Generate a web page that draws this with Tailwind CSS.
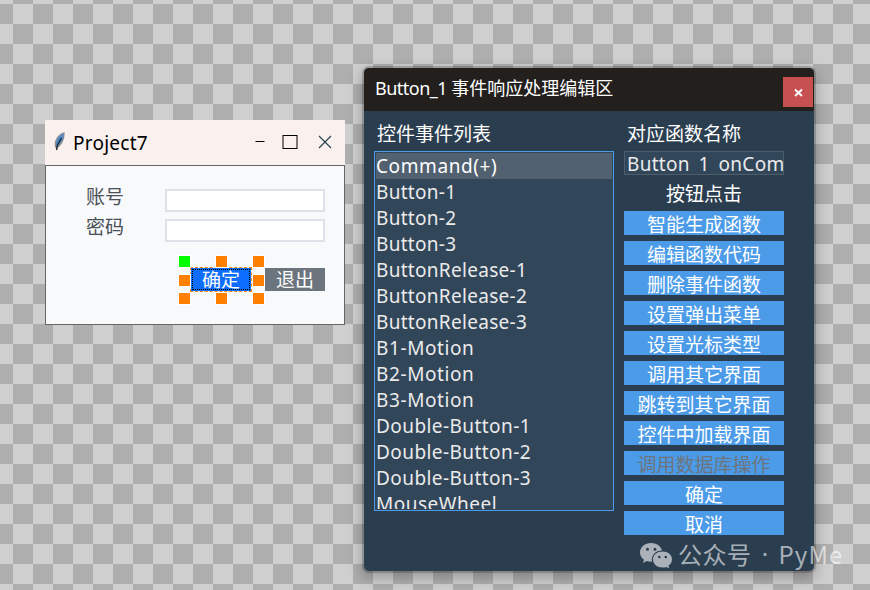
<!DOCTYPE html>
<html lang="zh-CN">
<head>
    <meta charset="UTF-8">
    <meta name="viewport" content="width=device-width, initial-scale=1.0">
    <title>PyMe</title>
    <script src="https://cdn.jsdelivr.net/npm/@tailwindcss/browser@4"></script>
</head>
<body class="relative w-[870px] h-[590px] overflow-hidden bg-[conic-gradient(#aeaeae_25%,#cfcfcf_0_50%,#aeaeae_0_75%,#cfcfcf_0)] bg-[length:40px_40px] bg-[position:13px_4px] font-['Noto_Sans','Noto_Sans_CJK_SC',sans-serif] text-[19px]">

    <!-- Project7 -->
    <div class="absolute left-[45px] top-[120px] w-[300px] h-[205px] flex flex-col">
        <div class="h-[45px] bg-[#faf0ed] flex items-center pl-2 text-black">
            <svg class="w-3 h-5 mr-2 -mt-1" viewBox="0 0 12 20">
                <path d="M2.500 17C0 12 3 4 11.500 1C12 7 10 13 4.500 17Z" fill="#8b8f96"/>
                <path d="M3 15C3 9 6 5 10.500 2.500C10.500 8 8 12 4 15Z" fill="#4a8ad0"/>
                <path d="M3.500 19L4.500 14L8.500 7" fill="none" stroke="#1c242e" stroke-width="1.400"/>
            </svg>
            <span class="grow text-[19px] tracking-[0.25px] mt-px">Project7</span>
            <svg class="w-[90px] h-[20px] mr-2" viewBox="0 0 90 20" fill="none" stroke="#000">
                <path d="M8.500 8.500H17.500" stroke-width="1"/>
                <rect x="36" y="2.500" width="14" height="13"/>
                <path d="M72 3L84 15M84 3L72 15" stroke="#23404d" stroke-width="1.100"/>
            </svg>
        </div>
        <div class="grow border border-[#666] bg-[#f8f9fb] pt-[23px] pl-10 pr-[19px] text-[#495057]">
            <div class="flex justify-between h-[30px]">
                <span class="leading-[17px]">账号</span>
                <div class="w-[160px] h-[23px] bg-white border-2 border-[#dee2e8]"></div>
            </div>
            <div class="flex justify-between h-[30px]">
                <span class="leading-[17px]">密码</span>
                <div class="w-[160px] h-[23px] bg-white border-2 border-[#dee2e8]"></div>
            </div>
            <div class="flex justify-end gap-[14px] mt-[19px] text-white leading-[25px] text-center">
                <div class="relative w-[60px] h-[23px] bg-[#0d6efd]">
                    确定
                    <div class="absolute -inset-px border border-dashed border-[#ff8000]"></div>
                    <div class="absolute inset-px border border-dotted border-black"></div>
                    <i class="absolute left-[-12px] top-[-12px] size-[11px] bg-[#00ff00] outline outline-white"></i>
                    <i class="absolute left-[25px] top-[-12px] size-[11px] bg-[#ff8000] outline outline-white"></i>
                    <i class="absolute left-[62px] top-[-12px] size-[11px] bg-[#ff8000] outline outline-white"></i>
                    <i class="absolute left-[-12px] top-[7px] size-[11px] bg-[#ff8000] outline outline-white"></i>
                    <i class="absolute left-[62px] top-[7px] size-[11px] bg-[#ff8000] outline outline-white"></i>
                    <i class="absolute left-[-12px] top-[25px] size-[11px] bg-[#ff8000] outline outline-white"></i>
                    <i class="absolute left-[25px] top-[25px] size-[11px] bg-[#ff8000] outline outline-white"></i>
                    <i class="absolute left-[62px] top-[25px] size-[11px] bg-[#ff8000] outline outline-white"></i>
                </div>
                <div class="w-[60px] h-[23px] bg-[#6c757d]">退出</div>
            </div>
        </div>
    </div>

    <!-- 事件响应处理编辑区 -->
    <div class="absolute left-[364px] top-[68px] w-[450px] h-[503px] flex flex-col rounded-[5px] bg-[#2b3e50] text-white shadow-[0_0_0_2px_#0000002e,0_5px_14px_2px_#00000040]">
        <div class="h-[43px] shrink-0 bg-[#231f1d] rounded-t-[5px] flex pl-[11px] pr-px">
            <span class="grow text-[18px] leading-[40px] whitespace-nowrap"><span class="tracking-[-0.5px]">Button_1 </span>事件响应处理编辑区</span>
            <div class="size-[30px] mt-[9px] bg-[#c75050] flex items-center justify-center">
                <svg class="size-[9px]" viewBox="0 0 9 9" stroke="#fff" stroke-width="2"><path d="M1 1.500L8 8M8 1.500L1 8"/></svg>
            </div>
        </div>
        <div class="flex pl-[10px] gap-[10px]">
            <div class="w-[240px]">
                <div class="h-10 pl-[3px] leading-[47px]">控件事件列表</div>
                <div class="h-[360px] border border-[#4c9be8] bg-[#32465a] p-px overflow-hidden text-[#ebebeb] tracking-[0.3px]">
                    <div class="h-[356px] overflow-hidden leading-[26px] *:h-[26px]">
                        <div class="bg-[#526170] text-white tracking-[0.6px]">Command(+)</div>
                        <div>Button-1</div>
                        <div>Button-2</div>
                        <div>Button-3</div>
                        <div>ButtonRelease-1</div>
                        <div>ButtonRelease-2</div>
                        <div>ButtonRelease-3</div>
                        <div class="tracking-[0.6px]">B1-Motion</div>
                        <div class="tracking-[0.6px]">B2-Motion</div>
                        <div class="tracking-[0.6px]">B3-Motion</div>
                        <div class="tracking-[0.43px]">Double-Button-1</div>
                        <div class="tracking-[0.43px]">Double-Button-2</div>
                        <div class="tracking-[0.43px]">Double-Button-3</div>
                        <div class="tracking-[0.5px]">MouseWheel</div>
                    </div>
                </div>
            </div>
            <div class="w-[160px]">
                <div class="h-10 pl-[3px] leading-[47px]">对应函数名称</div>
                <div class="h-6 border border-[#4e5d6c] bg-[#32465a] pl-[2px] text-[#ebebeb]">
                    <div class="h-[19px] leading-[25px] overflow-hidden whitespace-nowrap tracking-[0.3px]">Button_1_onCommand</div>
                </div>
                <div class="h-9 leading-[39px] text-center">按钮点击</div>
                <div class="flex flex-col gap-[6px] text-center leading-[28px] *:h-6 *:bg-[#4c9be8]">
                    <div>智能生成函数</div>
                    <div>编辑函数代码</div>
                    <div>删除事件函数</div>
                    <div>设置弹出菜单</div>
                    <div>设置光标类型</div>
                    <div>调用其它界面</div>
                    <div>跳转到其它界面</div>
                    <div>控件中加载界面</div>
                    <div class="text-[#6c757d]">调用数据库操作</div>
                    <div>确定</div>
                    <div>取消</div>
                </div>
            </div>
        </div>
    </div>

    <!-- 公众号 -->
    <div class="absolute left-[640px] top-[538px] flex items-center text-white/60 whitespace-nowrap">
        <svg class="w-8 h-[34px] mr-[6px]" viewBox="0 0 32 34">
            <path fill="currentColor" fill-rule="evenodd" d="M11 5C5 5 0 9 0 14.500C0 17.500 1.500 20 4 21.800L3 25L6.800 23C8.200 23.500 10 23.700 12 23.600C11 17 16 12.300 22 12.500C21 8 16.500 5 11 5ZM7.500 9.700a1.500 1.500 0 1 1 0 3a1.500 1.500 0 1 1 0-3ZM15 9.700a1.500 1.500 0 1 1 0 3a1.500 1.500 0 1 1 0-3Z"/>
            <path fill="currentColor" fill-rule="evenodd" d="M22.500 13.500C17 13.500 13 17 13 21.500C13 26 17 29.500 22.500 29.500C24 29.500 25 29.300 26.300 28.900L29.200 30.500L28.500 27.800C30.700 26.200 32 24 32 21.500C32 17 28 13.500 22.500 13.500ZM19.300 17.700a1.300 1.300 0 1 1 0 2.600a1.300 1.300 0 1 1 0-2.600ZM25.800 17.700a1.300 1.300 0 1 1 0 2.600a1.300 1.300 0 1 1 0-2.600Z"/>
        </svg>
        <div class="flex -mt-[2px] text-[24px] leading-[34px] font-['Noto_Sans_CJK_SC',sans-serif]">
            <span class="tracking-[0.5px]">公众号</span>
            <span class="w-[27px] text-center font-['Noto_Sans',sans-serif]">·</span>
            <span class="tracking-[1.1px]">PyMe</span>
        </div>
    </div>
</body>
</html>
